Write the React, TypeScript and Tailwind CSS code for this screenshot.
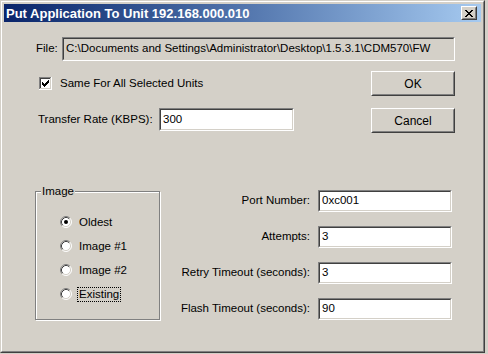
import type { ReactNode } from "react"

const FONT = "font-['Liberation_Sans',Arial,sans-serif]"

// 7x7 check glyph, classic win2k
const CHECK = [[6, 0], [5, 1], [6, 1], [0, 2], [4, 2], [5, 2], [6, 2], [0, 3], [1, 3], [3, 3], [4, 3], [5, 3], [0, 4], [1, 4], [2, 4], [3, 4], [4, 4], [1, 5], [2, 5], [3, 5], [2, 6]]
const CROSS = [[0, 0], [1, 0], [6, 0], [7, 0], [1, 1], [2, 1], [5, 1], [6, 1], [2, 2], [3, 2], [4, 2], [5, 2], [3, 3], [4, 3], [2, 4], [3, 4], [4, 4], [5, 4], [1, 5], [2, 5], [5, 5], [6, 5], [0, 6], [1, 6], [6, 6], [7, 6]]

function Sunken({ className = "", bg = "bg-white", children }: { className?: string; bg?: string; children?: ReactNode }) {
  return (
    <div className={`border border-t-[#808080] border-l-[#808080] border-r-white border-b-white ${className}`}>
      <div className={`h-full border border-t-[#404040] border-l-[#404040] border-r-[#d4d0c8] border-b-[#d4d0c8] ${bg} flex items-center pl-[2px] text-[11.5px] text-black whitespace-nowrap overflow-hidden`}>
        {children}
      </div>
    </div>
  )
}

function Button({ children }: { children: ReactNode }) {
  return (
    <div className="w-[84px] h-[25px] border border-t-white border-l-white border-r-[#404040] border-b-[#404040]">
      <div className="h-full border border-t-[#d4d0c8] border-l-[#d4d0c8] border-r-[#808080] border-b-[#808080] flex items-center justify-center text-[12px] text-black">
        {children}
      </div>
    </div>
  )
}

function Checkbox() {
  return (
    <svg width="13" height="13" viewBox="0 0 13 13" shapeRendering="crispEdges" className="shrink-0">
      <rect x="0" y="0" width="12" height="1" fill="#808080" />
      <rect x="0" y="0" width="1" height="12" fill="#808080" />
      <rect x="0" y="12" width="13" height="1" fill="#fff" />
      <rect x="12" y="0" width="1" height="13" fill="#fff" />
      <rect x="1" y="1" width="10" height="1" fill="#404040" />
      <rect x="1" y="1" width="1" height="10" fill="#404040" />
      <rect x="1" y="11" width="11" height="1" fill="#d4d0c8" />
      <rect x="11" y="1" width="1" height="11" fill="#d4d0c8" />
      <rect x="2" y="2" width="9" height="9" fill="#fff" />
      {CHECK.map(([x, y]) => <rect key={`${x}-${y}`} x={3 + x} y={3 + y} width="1" height="1" fill="#000" />)}
    </svg>
  )
}

function Radio({ checked }: { checked?: boolean }) {
  return (
    <svg width="12" height="12" viewBox="0 0 12 12" className="shrink-0">
      <circle cx="6" cy="6" r="5" fill="#fff" />
      <path d="M2.11 9.89 A5.5 5.5 0 0 1 9.89 2.11" fill="none" stroke="#808080" />
      <path d="M9.89 2.11 A5.5 5.5 0 0 1 2.11 9.89" fill="none" stroke="#fff" />
      <path d="M2.82 9.18 A4.5 4.5 0 0 1 9.18 2.82" fill="none" stroke="#404040" />
      <path d="M9.18 2.82 A4.5 4.5 0 0 1 2.82 9.18" fill="none" stroke="#d4d0c8" />
      {checked && <circle cx="6" cy="6" r="2" fill="#000" />}
    </svg>
  )
}

function RadioRow({ label, checked, focus }: { label: string; checked?: boolean; focus?: boolean }) {
  return (
    <div className="h-[24px] flex items-center gap-[7px]">
      <Radio checked={checked} />
      <span className={`text-[11.5px] text-black leading-[13px] ${focus ? "outline outline-1 outline-dotted outline-black px-px -ml-px" : ""}`}>{label}</span>
    </div>
  )
}

const fields = [
  { label: "Port Number:", value: "0xc001" },
  { label: "Attempts:", value: "3" },
  { label: "Retry Timeout (seconds):", value: "3" },
  { label: "Flash Timeout (seconds):", value: "90" },
]

export default function App() {
  return (
    <div className={`w-[488px] h-[354px] bg-[#d4d0c8] ${FONT}`}>
      {/* window frame */}
      <div className="w-[485px] h-[353px] border border-t-[#d4d0c8] border-l-[#d4d0c8] border-r-[#404040] border-b-[#404040]">
        <div className="h-full border border-t-white border-l-white border-r-[#808080] border-b-[#808080] p-[2px] flex flex-col">

          {/* caption */}
          <div className="h-[18px] shrink-0 flex items-center bg-gradient-to-r from-[#0a246a] to-[#a6caf0] pl-[2px] pr-[4px]">
            <span className="text-white font-bold text-[13px] leading-none">Put Application To Unit 192.168.000.010</span>
            <div className="ml-auto w-[16px] h-[14px] border border-t-white border-l-white border-r-[#404040] border-b-[#404040]">
              <div className="h-full bg-[#d4d0c8] border border-t-[#d4d0c8] border-l-[#d4d0c8] border-r-[#808080] border-b-[#808080] flex items-center justify-center">
                <svg width="8" height="7" viewBox="0 0 8 7" shapeRendering="crispEdges">
                  {CROSS.map(([x, y]) => <rect key={`${x}-${y}`} x={x} y={y} width="1" height="1" fill="#000" />)}
                </svg>
              </div>
            </div>
          </div>

          {/* client */}
          <div className="flex-1 flex flex-col text-black">
            <div className="mt-[15px] ml-[32px] flex items-center">
              <span className="w-[26px] text-[11.5px]">File:</span>
              <Sunken className="w-[393px] h-[24px]" bg="bg-[#d4d0c8]">
                C:\Documents and Settings\Administrator\Desktop\1.5.3.1\CDM570\FW
              </Sunken>
            </div>

            <div className="mt-[10px] flex items-start">
              <div className="ml-[34px] flex flex-col">
                <div className="mt-[6px] ml-px flex items-center gap-[8px] h-[13px]">
                  <Checkbox />
                  <span className="text-[11.5px]">Same For All Selected Units</span>
                </div>
                <div className="mt-[18px] flex items-center">
                  <span className="w-[121px] text-[11.5px]">Transfer Rate (KBPS):</span>
                  <Sunken className="w-[135px] h-[23px]">300</Sunken>
                </div>
              </div>
              <div className="ml-auto mr-[26px] flex flex-col gap-[12px]">
                <Button>OK</Button>
                <Button>Cancel</Button>
              </div>
            </div>

            <div className="mt-[52px] flex items-start">
              <div className="relative ml-[31px] mt-[6px] w-[125px] h-[129px] border border-[#808080] shadow-[inset_1px_1px_0_#fff,1px_1px_0_#fff]">
                <span className="absolute -top-[8px] left-[5px] px-px bg-[#d4d0c8] text-[11.5px] leading-[14px]">Image</span>
                <div className="pl-[24px] pt-[18px] flex flex-col">
                  <RadioRow label="Oldest" checked />
                  <RadioRow label="Image #1" />
                  <RadioRow label="Image #2" />
                  <RadioRow label="Existing" focus />
                </div>
              </div>
              <div className="ml-auto mr-[29px] mt-[5px] flex flex-col gap-[14px]">
                {fields.map(f => (
                  <div key={f.label} className="flex items-center justify-end gap-[8px]">
                    <span className="text-[11.5px]">{f.label}</span>
                    <Sunken className="w-[134px] h-[22px]">{f.value}</Sunken>
                  </div>
                ))}
              </div>
            </div>
          </div>
        </div>
      </div>
    </div>
  )
}
